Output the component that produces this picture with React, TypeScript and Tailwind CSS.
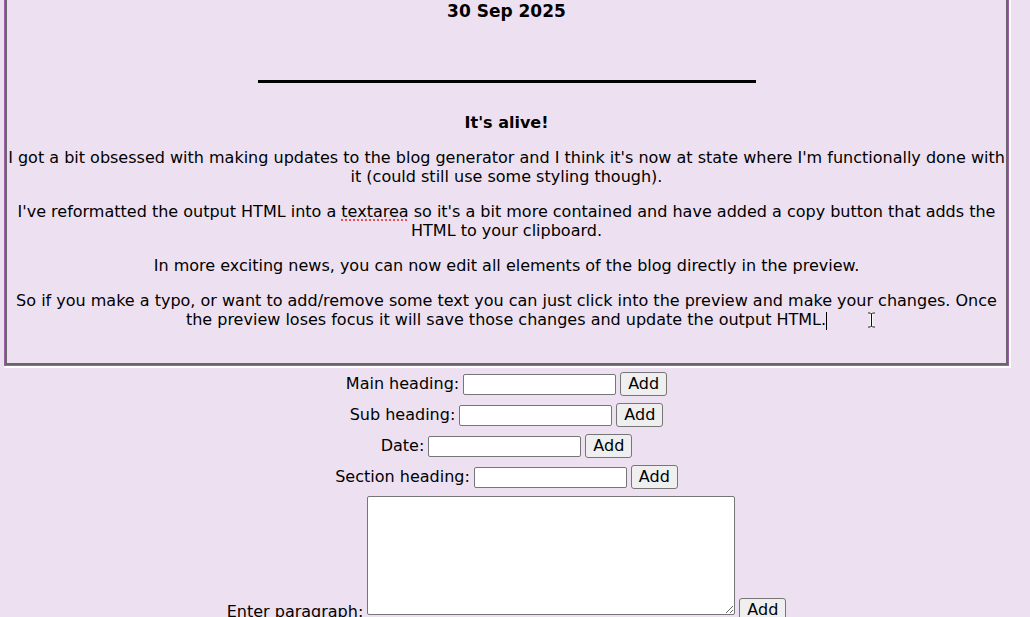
const font = "font-['DejaVu_Sans','Open_Sans',sans-serif]";

function FieldRow({ label, width = "w-[153px]" }: { label: string; width?: string }) {
	return (
		<div className="flex items-center justify-center h-[31px]">
			<label className="text-[16px] text-black mr-[4px]">{label}</label>
			<input
				type="text"
				className={`${width} h-[21px] bg-white border border-[#767676] rounded-[2px]`}
			/>
			<button className="ml-[4px] h-[24px] px-[7px] bg-[#efefef] border border-[#767676] rounded-[3px] text-[16px] text-black leading-none">
				Add
			</button>
		</div>
	);
}

export default function App() {
	return (
		<div className={`relative min-h-[617px] w-full bg-[#ede1f1] overflow-hidden ${font}`}>
			<div className="w-[1013px] px-[5px]">
				<div className="-mt-[30px] border-2 border-[#6e646f] shadow-[0_0_0_1px_#9a62a2,1px_1px_0_2px_#ffffff] text-center text-black px-[1px] pb-[33px]">
					<div className="pt-[28px] text-[17px] leading-[22px] font-bold">30 Sep 2025</div>
					<div className="flex justify-center pt-[58px]">
						<div className="w-[498px] h-[3px] bg-black" />
					</div>
					<div className="pt-[30px] text-[16px] leading-[19px] font-bold">It's alive!</div>
					<div className="text-[16px] leading-[19px] flex flex-col gap-[16px] pt-[16px]">
						<p>
							I got a bit obsessed with making updates to the blog generator and I think it's now at state where I'm functionally done with it (could still use some styling though).
						</p>
						<p>
							I've reformatted the output HTML into a{" "}
							<span className="underline decoration-dotted decoration-[#e0302a] underline-offset-[3px]">textarea</span> so it's a bit more contained and have added a copy button that adds the HTML to your clipboard.
						</p>
						<p>In more exciting news, you can now edit all elements of the blog directly in the preview.</p>
						<p>
							So if you make a typo, or want to add/remove some text you can just click into the preview and make your changes. Once the preview loses focus it will save those changes and update the output HTML.
							<span className="inline-block w-px h-[18px] bg-black align-middle" />
						</p>
					</div>
				</div>

				<div className="pt-[4px]">
					<FieldRow label="Main heading:" />
					<FieldRow label="Sub heading:" />
					<FieldRow label="Date:" />
					<FieldRow label="Section heading:" />
					<div className="flex items-end justify-center pt-[3px]">
						<label className="text-[16px] text-black mr-[4px] leading-[19px] -mb-[6px]">Enter paragraph:</label>
						<textarea className="w-[368px] h-[119px] bg-white border border-[#767676] rounded-[2px] resize" />
						<button className="ml-[4px] -mb-[7px] h-[24px] px-[7px] bg-[#efefef] border border-[#767676] rounded-[3px] text-[16px] text-black leading-none">
							Add
						</button>
					</div>
				</div>
			</div>

			{/* mouse text cursor */}
			<svg className="absolute left-[867px] top-[312px]" width="9" height="16" viewBox="0 0 9 16" fill="none">
				<path d="M1 1h2.5l1 1 1-1H8M4.5 2v12M1 15h2.5l1-1 1 1H8" stroke="#fff" strokeWidth="2.5" />
				<path d="M1 1h2.5l1 1 1-1H8M4.5 2v12M1 15h2.5l1-1 1 1H8" stroke="#111" strokeWidth="1" />
			</svg>
		</div>
	);
}
